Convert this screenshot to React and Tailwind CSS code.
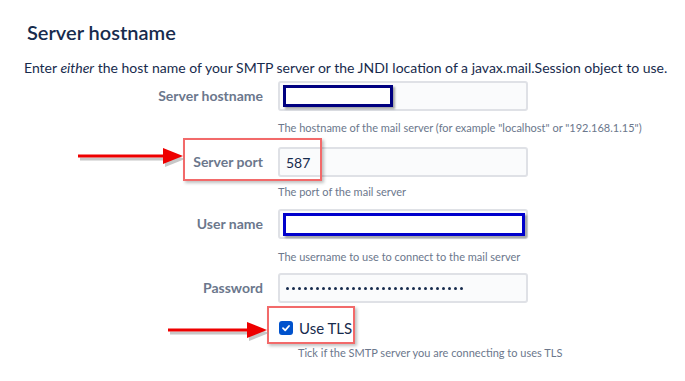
import React from "react";

const font = { fontFamily: "Lato, 'Noto Sans', sans-serif" };

function Input({ children, className = "" }) {
  return (
    <div
      className={
        "relative h-[30px] w-[250px] rounded-[3px] border-2 border-[#dfe1e6] bg-[#fafbfc] flex items-center px-[4px] text-[14px] text-[#172b4d] " +
        className
      }
    >
      {children}
    </div>
  );
}

function Label({ children }) {
  return (
    <div className="w-[239px] text-right text-[14px] font-bold text-[#6b778c] leading-[30px]">
      {children}
    </div>
  );
}

function Helper({ children, className = "" }) {
  return (
    <div className={"ml-[254px] text-[11px] leading-[16px] text-[#6b778c] " + className}>
      {children}
    </div>
  );
}

function Arrow({ width, className }) {
  return (
    <svg
      className={"absolute " + className}
      width={width + 4}
      height="22"
      viewBox={`0 0 ${width + 4} 22`}
    >
      <g transform="translate(2,3)" fill="#9a9a9a" opacity="0.55">
        <rect x="0" y="6.5" width={width - 18} height="3" />
        <polygon points={`${width - 20},0 ${width},8 ${width - 20},16`} />
      </g>
      <g fill="#ee0000">
        <rect x="0" y="6.5" width={width - 18} height="3" />
        <polygon points={`${width - 20},0 ${width},8 ${width - 20},16`} />
      </g>
    </svg>
  );
}

export default function App() {
  const dots = Array.from({ length: 30 });
  return (
    <div className="relative w-[685px] h-[381px] bg-white overflow-hidden" style={font}>
      <div className="pl-[24px] pt-[20px]">
        <h2 className="text-[20px] leading-[24px] font-semibold text-[#172b4d] ml-[3px]">
          Server hostname
        </h2>
        <p className="mt-[14px] text-[14px] leading-[20px] text-[#172b4d]">
          Enter <em>either</em> the host name of your SMTP server or the JNDI location of a
          javax.mail.Session object to use.
        </p>

        <div className="mt-[3px] flex gap-[15px]">
          <Label>Server hostname</Label>
          <Input>
            <div className="absolute left-[3px] top-[2px] h-[22px] w-[110px] border-[3px] border-[#000080] bg-white shadow-[2px_2px_2px_rgba(0,0,0,0.35)]" />
          </Input>
        </div>
        <Helper className="mt-[9px]">
          The hostname of the mail server (for example "localhost" or "192.168.1.15")
        </Helper>

        <div className="relative mt-[11px] flex gap-[15px]">
          <Label>Server port</Label>
          <Input>
            <span className="ml-[2px]">587</span>
          </Input>
        </div>
        <Helper className="mt-[7px]">The port of the mail server</Helper>

        <div className="mt-[9px] flex gap-[15px]">
          <Label>User name</Label>
          <Input>
            <div className="absolute left-[3px] top-[2px] h-[23px] w-[242px] border-[3px] border-[#0000cc] bg-white shadow-[2px_2px_2px_rgba(0,0,0,0.35)]" />
          </Input>
        </div>
        <Helper className="mt-[10px]">The username to use to connect to the mail server</Helper>

        <div className="mt-[8px] flex gap-[15px]">
          <Label>Password</Label>
          <Input>
            <div className="ml-[2px] flex gap-[3px]">
              {dots.map((_, i) => (
                <span key={i} className="block h-[3px] w-[3px] rounded-full bg-[#172b4d]" />
              ))}
            </div>
          </Input>
        </div>

        <div className="mt-[15px] ml-[255px] flex items-center gap-[6px] h-[20px]">
          <span className="flex h-[14px] w-[14px] items-center justify-center rounded-[3px] bg-[#0052cc]">
            <svg width="10" height="10" viewBox="0 0 10 10">
              <path d="M2 5.2 L4.2 7.3 L8 3" stroke="white" strokeWidth="1.8" fill="none" strokeLinecap="round" strokeLinejoin="round" />
            </svg>
          </span>
          <span className="text-[15px] text-[#172b4d]">Use TLS</span>
        </div>
        <Helper className="mt-[7px] ml-[274px]">Tick if the SMTP server you are connecting to uses TLS</Helper>
      </div>

      {/* annotation boxes */}
      <div className="absolute left-[183px] top-[138px] h-[43px] w-[139px] border-2 border-[#f26a6a] shadow-[2px_2px_3px_rgba(0,0,0,0.25)]" />
      <div className="absolute left-[267px] top-[306px] h-[38px] w-[88px] border-2 border-[#f26a6a] shadow-[2px_2px_3px_rgba(0,0,0,0.25)]" />
      <Arrow width={105} className="left-[78px] top-[148px]" />
      <Arrow width={99} className="left-[168px] top-[322px]" />
    </div>
  );
}
